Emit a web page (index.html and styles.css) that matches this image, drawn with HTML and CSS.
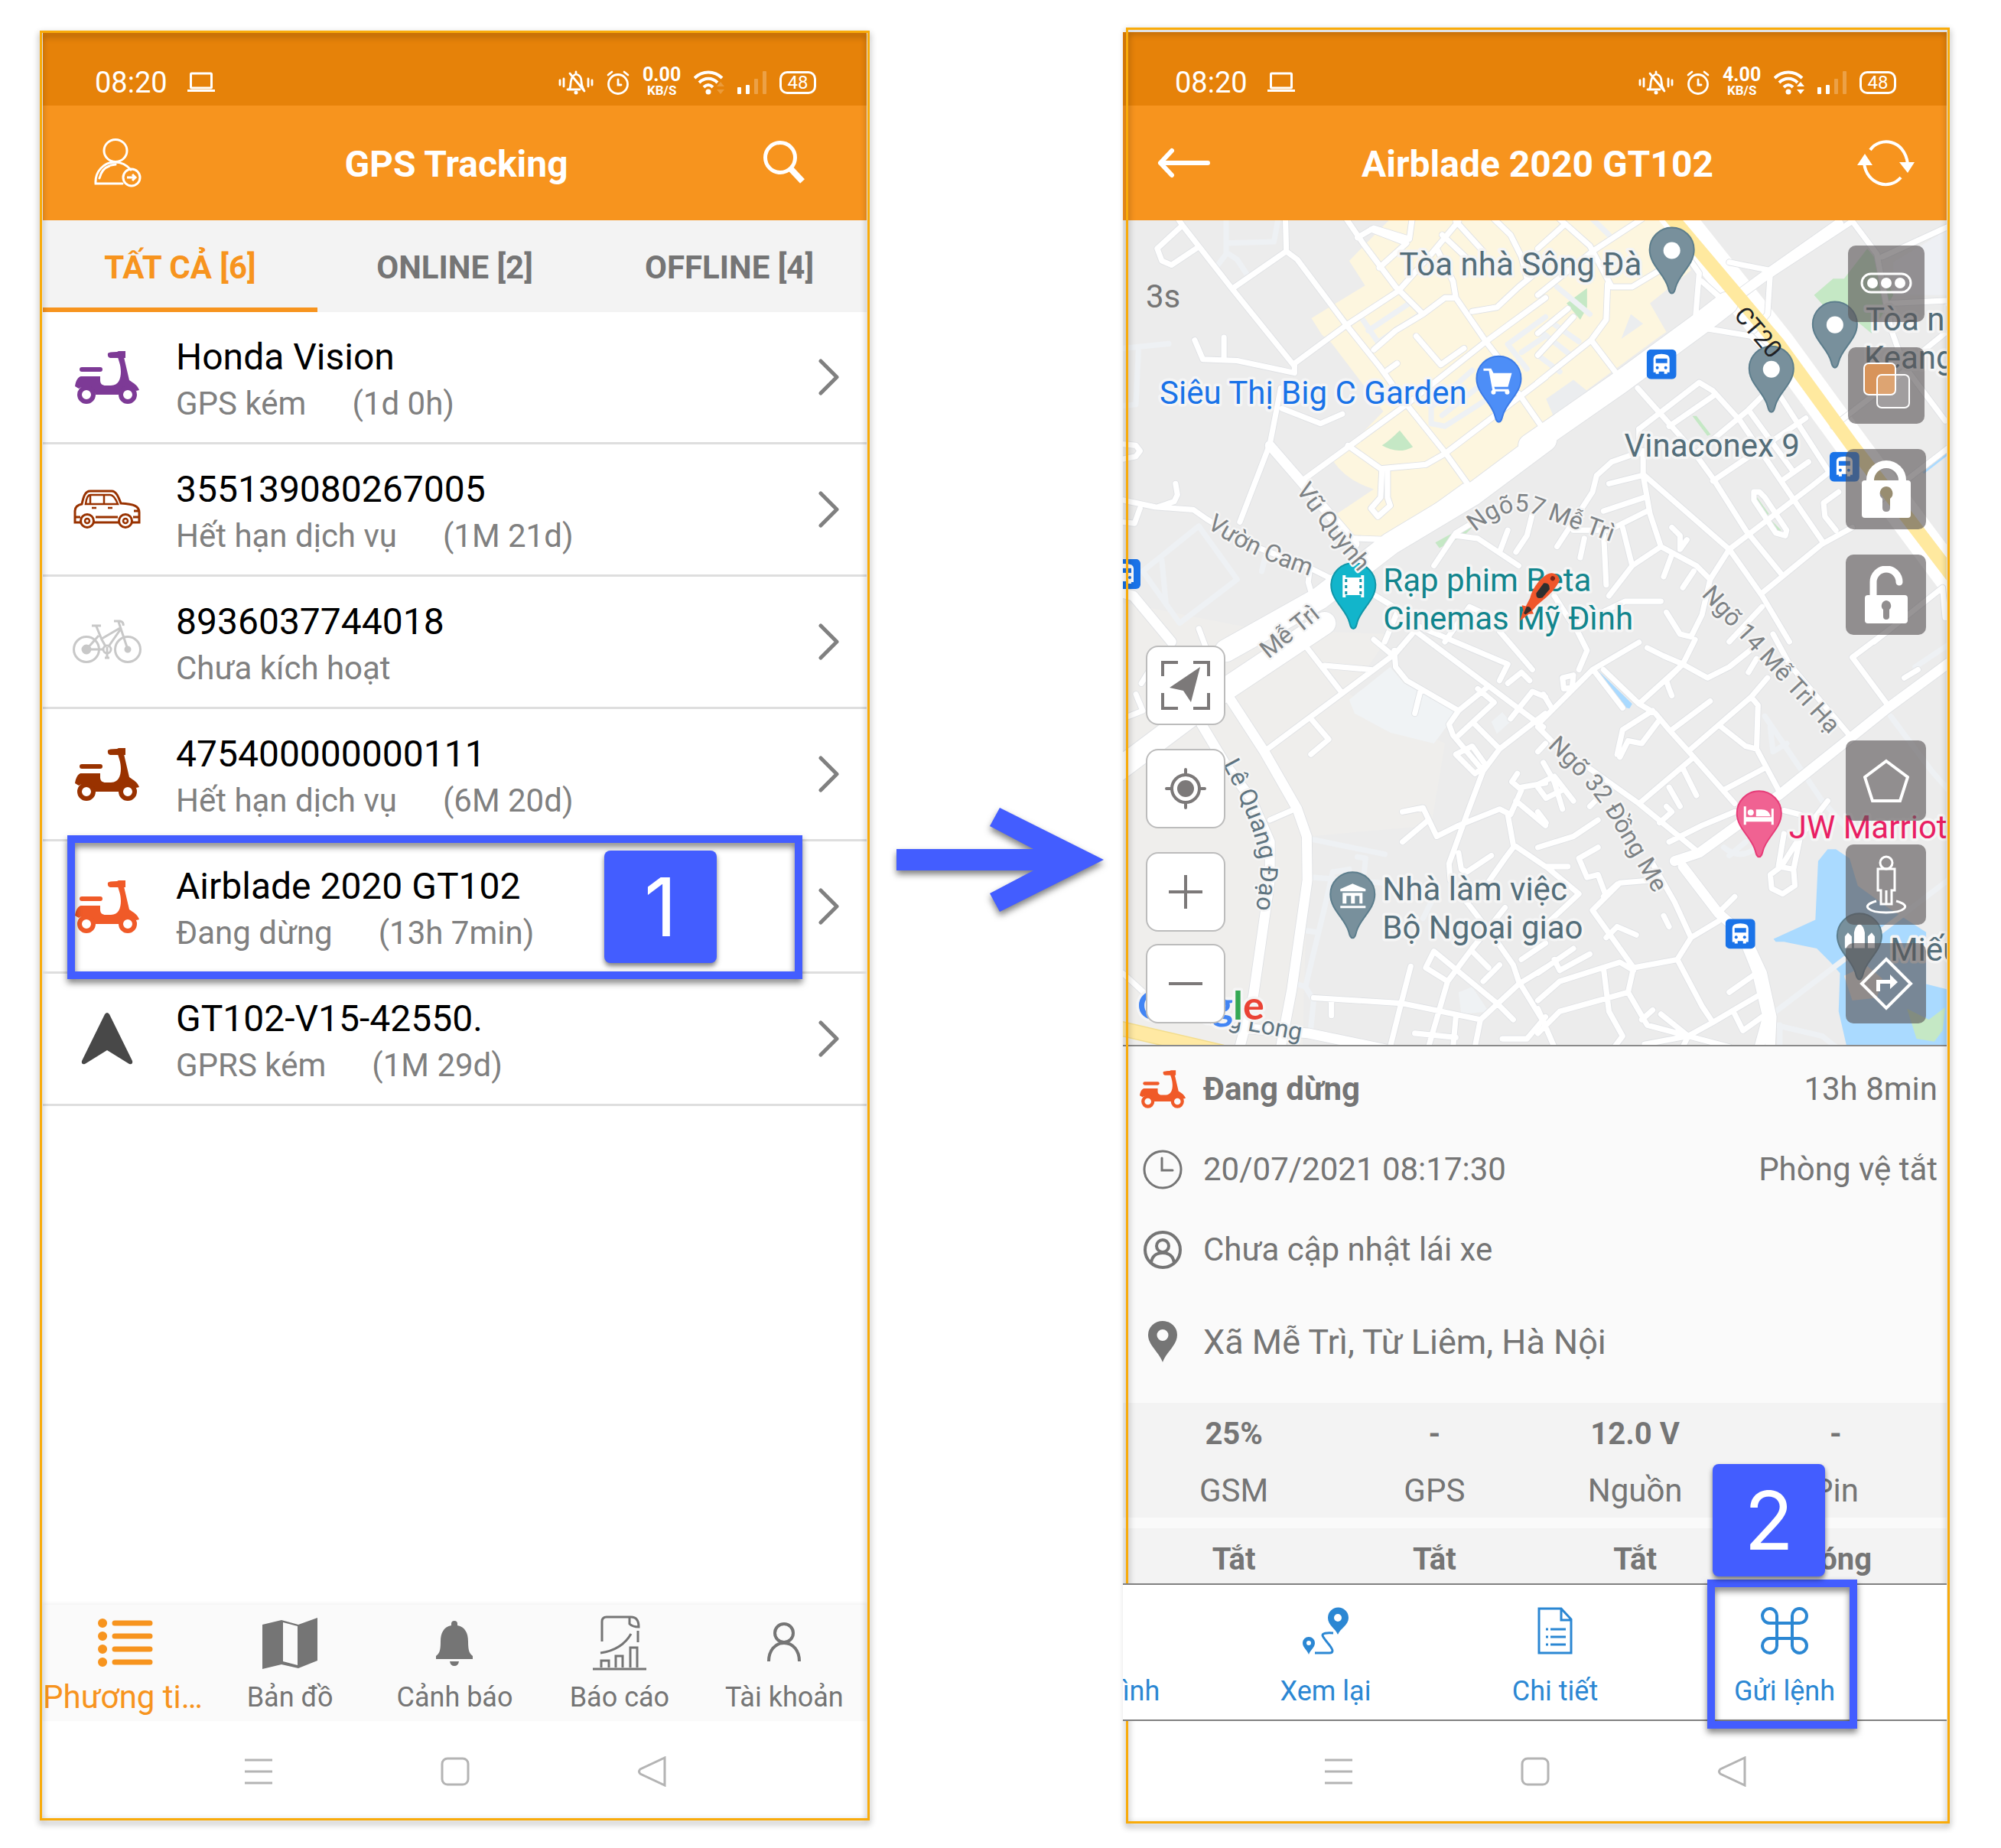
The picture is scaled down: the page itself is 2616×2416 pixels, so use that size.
FILE: index.html
```html
<!DOCTYPE html>
<html lang="vi">
<head>
<meta charset="utf-8">
<meta name="viewport" content="width=device-width, initial-scale=1">
<title>GPS Tracking</title>
<link rel="stylesheet" href="styles.css">
</head>
<body>
<svg class="sprite" aria-hidden="true">
  <symbol id="laptop" viewBox="0 0 36 28">
    <rect x="4.500" y="2" width="27" height="19" rx="1" fill="none" stroke="currentColor" stroke-width="3"/>
    <path d="M0 23H36V26H0Z" fill="currentColor"/>
  </symbol>
  <symbol id="mute" viewBox="0 0 46 32">
    <g fill="none" stroke="currentColor" stroke-width="2.800" stroke-linecap="round">
      <path d="M2 13V19M7 11V21M39 11V21M44 13V19"/>
      <path d="M14 25C17 22 15 17 17 12C18 8 20 6 23 5C28 6 30 10 30 14C30 19 31 22 33 25M12 25H28M15 4L34 27M23 2V4"/>
    </g>
    <circle cx="23" cy="29" r="2.500" fill="currentColor"/>
  </symbol>
  <symbol id="alarm" viewBox="0 0 30 32">
    <g fill="none" stroke="currentColor" stroke-width="2.800" stroke-linecap="round">
      <circle cx="15" cy="18" r="12.500"/>
      <path d="M15 12V19H19M2 6L7 2M28 6L23 2"/>
    </g>
  </symbol>
  <symbol id="wifi" viewBox="0 0 40 32">
    <g fill="none" stroke="currentColor" stroke-width="4">
      <path d="M1 10C11 0 27 0 37 10M7 16C14 9 24 9 31 16M13 22C17 18 21 18 25 22"/>
    </g>
    <circle cx="19" cy="28" r="3.500" fill="currentColor"/>
  </symbol>
  <symbol id="signal" viewBox="0 0 38 32">
    <g fill="currentColor">
      <rect x="0" y="22" width="5" height="9" rx="1"/>
      <rect x="11" y="19" width="5" height="12" rx="1"/>
      <rect x="22" y="11" width="5" height="20" rx="1" opacity=".25"/>
      <rect x="33" y="1" width="5" height="30" rx="1" opacity=".25"/>
    </g>
  </symbol>
  <symbol id="scooter" viewBox="0 0 84 69">
    <g fill="currentColor">
      <path d="M43 3Q44 1 55 1L57 0H66V9H46Q42 8 43 3Z"/>
      <rect x="6" y="21" width="30" height="6" rx="3"/>
      <path d="M0 46C1 38 5 33 8 33H33V38C33 43 36 45 40 45H47C57 45 60 36 60 27C60 18 57 12 56 8H64L71 38C77 42 82 45 84 51L80 52C72 45 62 48 57 57H27C25 48 12 44 5 49Z"/>
    </g>
    <g fill="none" stroke="currentColor" stroke-width="6"><circle cx="15" cy="57" r="9"/><circle cx="69" cy="57" r="9"/></g>
  </symbol>
  <symbol id="chevron" viewBox="0 0 28 48">
    <path d="M3 3L24 24L3 45" fill="none" stroke="currentColor" stroke-width="5" stroke-linecap="round" stroke-linejoin="round"/>
  </symbol>
  <symbol id="pin" viewBox="-32 -32 64 92">
    <path d="M0 57C-3 57-4 53-5 49C-9 32-29 20-29 0A29 29 0 1 1 29 0C29 20 9 32 5 49C4 53 3 57 0 57Z"/>
  </symbol>
  <symbol id="bus" viewBox="0 0 39 39">
    <rect width="39" height="39" rx="6" fill="#1a73e8"/>
    <path d="M9 30V12Q9 6 19.500 6Q30 6 30 12V30H27V32H23V29H16V32H12V30Z" fill="#fff"/>
    <path d="M12 12H27V18H12Z" fill="#1a73e8"/>
    <circle cx="14" cy="24" r="2" fill="#1a73e8"/><circle cx="25" cy="24" r="2" fill="#1a73e8"/>
  </symbol>
</svg>

<main class="guide">
  <section class="phone" aria-label="Danh sách phương tiện">
    <div class="status-bar">
      <span class="time">08:20</span>
      <svg class="laptop"><use href="#laptop"/></svg>
      <div class="status-icons">
        <svg width="46" height="32"><use href="#mute"/></svg>
        <svg width="30" height="32"><use href="#alarm"/></svg>
        <span class="speed"><b>0.00</b><small>KB/S</small></span>
        <svg width="40" height="32" viewBox="0 0 40 32"><use href="#wifi"/><path d="M30 21L35 15L40 21ZM30 25L35 31L40 25Z" fill="currentColor" opacity=".2"/></svg>
        <svg width="38" height="32"><use href="#signal"/></svg>
        <span class="battery">48</span>
      </div>
    </div>
    <header class="app-bar app-bar-list">
      <button class="bar-button" aria-label="Chuyển tài khoản">
        <svg width="62" height="64" viewBox="0 0 62 64" fill="none" stroke="currentColor" stroke-width="3">
          <ellipse cx="28" cy="16" rx="15" ry="14.500"/>
          <path d="M37 59H2C1 44 12 31 27 31C36 31 43 35 48 41M7 52C9 44 14 38 20 36M22 35L28 34" stroke-linecap="round"/>
          <circle cx="49" cy="51" r="11"/>
          <path d="M43 51H54M50 47L54 51L50 55"/>
        </svg>
      </button>
      <h1>GPS Tracking</h1>
      <button class="bar-button" aria-label="Tìm kiếm">
        <svg width="68" height="58" viewBox="0 0 68 58" fill="none" stroke="currentColor">
          <circle cx="22" cy="22" r="19.500" stroke-width="5"/>
          <path d="M36 37L51 53" stroke-width="8"/>
        </svg>
      </button>
    </header>
    <nav class="tabs">
      <a class="tab tab-active" href="#all">TẤT CẢ [6]</a>
      <a class="tab" href="#online">ONLINE [2]</a>
      <a class="tab" href="#offline">OFFLINE [4]</a>
    </nav>
    <ul class="vehicles">
      <li><a class="vehicle" href="#v1">
        <svg class="vehicle-icon purple" width="84" height="69"><use href="#scooter"/></svg>
        <span class="vehicle-text"><span class="name">Honda Vision</span><span class="sub"><span>GPS kém</span><span>(1d 0h)</span></span></span>
        <svg class="chevron"><use href="#chevron"/></svg></a></li>
      <li><a class="vehicle" href="#v2">
        <svg class="vehicle-icon brown" width="88" height="52" viewBox="0 0 88 52" fill="none" stroke="currentColor" stroke-width="3">
          <path d="M10 43H2V28C2 22 6 20 11 19C13 10 15 2 22 2H50C56 2 59 10 62 18C80 19 86 22 86 30V43H77M27 43H59M2 36H9M29 36H58M78 36H86M79 28H86"/>
          <path d="M16 19C17 11 19 7 22 7H48C53 7 56 14 58 19ZM40 7V19M22 7V19M24 24H30M45 24H51" stroke-width="2.500"/>
          <circle cx="18" cy="41" r="8.500"/><circle cx="68" cy="41" r="8.500"/>
          <circle cx="18" cy="41" r="3" stroke-width="2.500"/><circle cx="68" cy="41" r="3" stroke-width="2.500"/>
        </svg>
        <span class="vehicle-text"><span class="name">355139080267005</span><span class="sub"><span>Hết hạn dịch vụ</span><span>(1M 21d)</span></span></span>
        <svg class="chevron"><use href="#chevron"/></svg></a></li>
      <li><a class="vehicle" href="#v3">
        <svg class="vehicle-icon silver" width="90" height="58" viewBox="0 0 90 58" fill="none" stroke="currentColor" stroke-width="3">
          <circle cx="18" cy="39" r="16.500"/><circle cx="72" cy="39" r="16.500"/>
          <circle cx="18" cy="39" r="5" fill="currentColor"/><circle cx="72" cy="39" r="3" fill="currentColor"/>
          <path d="M18 39L34 21M18 39H41M31 9L38 26L43 35M25 8H37M38 25L62 11M47 35L63 12L60 3M54 2H62Q67 3 66 8M63 12L72 39M45 44V50M42 50H48"/>
          <circle cx="45" cy="39" r="5"/><path d="M45 36V43"/>
        </svg>
        <span class="vehicle-text"><span class="name">8936037744018</span><span class="sub"><span>Chưa kích hoạt</span></span></span>
        <svg class="chevron"><use href="#chevron"/></svg></a></li>
      <li><a class="vehicle" href="#v4">
        <svg class="vehicle-icon brown" width="84" height="69"><use href="#scooter"/></svg>
        <span class="vehicle-text"><span class="name">475400000000111</span><span class="sub"><span>Hết hạn dịch vụ</span><span>(6M 20d)</span></span></span>
        <svg class="chevron"><use href="#chevron"/></svg></a></li>
      <li class="step-target"><a class="vehicle" href="#v5">
        <svg class="vehicle-icon orange" width="84" height="69"><use href="#scooter"/></svg>
        <span class="vehicle-text"><span class="name">Airblade 2020 GT102</span><span class="sub"><span>Đang dừng</span><span>(13h 7min)</span></span></span>
        <svg class="chevron"><use href="#chevron"/></svg></a>
        <span class="highlight highlight-row"></span>
        <span class="step step-one">1</span></li>
      <li><a class="vehicle" href="#v6">
        <svg class="vehicle-icon dark" width="68" height="68" viewBox="0 0 68 68"><path d="M31 2Q34 -2 37 2L67 63Q68 68 63 67L34 49L5 67Q0 68 1 63Z" fill="currentColor"/></svg>
        <span class="vehicle-text"><span class="name">GT102-V15-42550.</span><span class="sub"><span>GPRS kém</span><span>(1M 29d)</span></span></span>
        <svg class="chevron"><use href="#chevron"/></svg></a></li>
    </ul>
    <nav class="bottom-nav">
      <a class="nav-item nav-active" href="#vehicles">
        <svg width="72" height="76" viewBox="0 0 72 76" stroke="currentColor" stroke-linecap="round">
          <path d="M22 12H68M22 29H68M22 46H68M22 63H68" stroke-width="7"/>
          <path d="M6 12h.1M6 29h.1M6 46h.1M6 63h.1" stroke-width="12"/>
        </svg><span>Phương tiện</span></a>
      <a class="nav-item" href="#map">
        <svg width="72" height="76" viewBox="0 0 72 76">
          <path d="M0 14L25 8L47 14L72 5V61L47 71L25 66L0 72Z" fill="currentColor"/><path d="M27 11L46 16V67L27 62Z" fill="#fafafa"/>
        </svg><span>Bản đồ</span></a>
      <a class="nav-item" href="#alerts">
        <svg width="48" height="76" viewBox="0 0 48 76" fill="currentColor">
          <path d="M20 13Q20 9 24 9Q28 9 28 13V15C38 17 42 25 42 36C42 49 44 52 48 55V59H0V55C4 52 6 49 6 36C6 25 10 17 20 15ZM18 62H30Q29 68 24 68Q19 68 18 62Z"/>
        </svg><span>Cảnh báo</span></a>
      <a class="nav-item" href="#reports">
        <svg width="70" height="76" viewBox="0 0 70 76" fill="none" stroke="currentColor" stroke-width="3">
          <path d="M12 36V10Q12 4 18 4H50Q60 4 60 17Q52 17 48 13V4M59 22V37M10 51Q38 47 50 26"/>
          <path d="M11 70V61H21V70M30 70V55H39V70M49 70V44H58V70M0 72H70"/>
        </svg><span>Báo cáo</span></a>
      <a class="nav-item" href="#account">
        <svg width="46" height="76" viewBox="0 0 46 76" fill="none" stroke="currentColor" stroke-width="4">
          <circle cx="23" cy="25" r="12"/><path d="M3 62C3 48 11 38 23 38C35 38 43 48 43 62"/>
        </svg><span>Tài khoản</span></a>
    </nav>
    <div class="system-nav">
      <svg width="36" height="40" viewBox="0 0 36 40"><path d="M0 5H36M0 20H36M0 35H36"/></svg>
      <svg width="40" height="40" viewBox="0 0 40 40"><rect x="3" y="3" width="34" height="34" rx="7"/></svg>
      <svg width="40" height="40" viewBox="0 0 40 40"><path d="M37 2V38L5 23Q2 20 5 17Z"/></svg>
    </div>
    <span class="frame frame-list"></span>
  </section>

  <div class="arrow">
    <svg width="272" height="136" viewBox="0 0 272 136"><path d="M0 54H179L122 24L135 0L271 68L135 136L122 112L179 82H0Z" fill="#435dff"/></svg>
  </div>

  <section class="phone" aria-label="Chi tiết phương tiện">
    <div class="status-bar">
      <span class="time">08:20</span>
      <svg class="laptop"><use href="#laptop"/></svg>
      <div class="status-icons">
        <svg width="46" height="32"><use href="#mute"/></svg>
        <svg width="30" height="32"><use href="#alarm"/></svg>
        <span class="speed"><b>4.00</b><small>KB/S</small></span>
        <svg width="40" height="32" viewBox="0 0 40 32"><use href="#wifi"/><path d="M30 21L35 15L40 21ZM30 25L35 31L40 25Z" fill="currentColor"/></svg>
        <svg width="38" height="32"><use href="#signal"/></svg>
        <span class="battery">48</span>
      </div>
    </div>
    <header class="app-bar app-bar-detail">
      <button class="bar-button" aria-label="Quay lại">
        <svg width="70" height="40" viewBox="0 0 70 40" fill="none" stroke="currentColor" stroke-width="6" stroke-linecap="round" stroke-linejoin="round"><path d="M19 4L4 20L19 36M4 20H66"/></svg>
      </button>
      <h1>Airblade 2020 GT102</h1>
      <button class="bar-button" aria-label="Tải lại">
        <svg width="75" height="62" viewBox="0 0 75 62">
          <path d="M17 14C30 -4 62 0 66 32M57 50C43 67 12 60 9 31" fill="none" stroke="currentColor" stroke-width="4"/>
          <path d="M55 30H75L66 44ZM0 34H20L10 19Z" fill="currentColor"/>
        </svg>
      </button>
    </header>

    <div class="map">
      <svg class="map-canvas" viewBox="0 0 1076 1080" preserveAspectRatio="xMidYMid slice" role="img" aria-label="Bản đồ">
        <defs>
          <path id="p-vuon" d="M109 402Q158 438 250 468"/>
          <path id="p-vu" d="M226 354Q258 402 320 476"/>
          <path id="p-57" d="M460 409Q500 374 534 384L650 426"/>
          <path id="p-metri" d="M190 575L270 510"/>
          <path id="p-ct" d="M797 126L860 200"/>
          <path id="p-14" d="M755 491L940 692"/>
          <path id="p-32" d="M554 689Q610 740 632 776L705 900"/>
          <path id="p-le" d="M130 712Q168 780 179 835Q182 862 170 920"/>
          <path id="p-long" d="M66 1042L260 1078"/>
          <g id="roads">
            <g transform="translate(-8 -8) scale(.357143)">
              <path d="M225 22L240 45L420 275L650 560M240 45L148 130L165 175L200 190L290 130M425 275L620 140L617 22M620 140L660 170L840 410L960 560L1060 700L1200 875L1290 1000M650 585V550L840 410L1030 285M650 585L440 540L315 535L285 465M392 535V455M600 640L560 845L450 1130M605 715L745 770L825 735"/>
              <path d="M690 970L1060 700L1350 470L1568 310M845 850L965 935L1130 920L1200 880L1568 600M840 22L900 110L1020 270L1120 370M880 90L940 55L1070 95L1080 22M960 200L1060 110L930 60M1030 285L1150 150L1250 30M1170 130L1230 250L1240 310L1350 470L1450 600M1240 310H1200L1120 370L1020 430L940 500M1190 80L1280 165M1240 30L1340 140M1300 360L1390 345L1470 270L1568 190M1380 22L1440 80L1480 160L1500 240M1095 450L1185 555L1270 495M990 575L1025 550M870 1190L1000 1195L1270 1000"/>
              <path d="M22 1050L140 1075L280 1085L330 1120L480 1210L690 1290L790 1340M150 1075L210 1055L222 1030L215 990M85 1080L65 1135L22 1130M705 1310L700 1350L712 1390M22 845L70 850L85 870L70 890L22 900M970 940L965 1040L930 1080L955 1110L1000 1070L990 1040V940M1160 1290L1240 1170L1290 1140M1240 1180L1320 1190L1470 1290M1430 1160L1400 1240M1520 1100L1500 1180L1460 1240M930 1390L1030 1450L980 1568M1200 1568L1290 1440L1420 1500M1470 660L1560 790M300 1520L330 1600"/>
              <path class="wide" d="M560 850L690 1000L870 1210M22 1390L60 1400L200 1568"/>
              <path class="highway" d="M400 1600L740 1410L1000 1210L1300 1030L1568 830"/>
            </g>
            <g transform="translate(542 -8) scale(.357143)">
              <path d="M0 130L100 40L190 120L270 270H345L470 195M100 40L80 22M0 300L200 140L380 22M255 260L250 390L195 465L290 590M0 620L195 465M0 520L130 380M0 440L110 350M575 400L590 220L520 120M600 250L690 330M700 180L850 210M850 220L840 370L790 430M600 420L780 450L850 520"/>
              <path d="M1150 30L1240 150L1290 420L1340 560L1490 760M1150 30L830 240M1260 160L1500 50M1290 330L1500 320M1340 560L1500 430M1080 780L1340 580M370 790L590 620L640 650L740 760L930 1040L1040 1200M365 640L560 860L640 970L760 1160L890 1320M480 780L640 670M590 870L770 720L830 660M640 980L980 750M700 1230L1000 1000L1150 880M770 720L930 940M880 660L1060 940M890 980L990 910M1100 1020L1045 1060L1050 1110L1090 1160M820 1390L1040 1210L1150 1150M1200 1090L1500 860"/>
              <path d="M385 870V960L410 1100L450 1220L580 1290L630 1340L700 1230L390 960M700 1230L820 1400L920 1568M370 790V880M385 870L270 910L215 960L200 1020L70 1220M260 990L380 960M240 1090L390 1040M130 1160H260L400 1090M310 1150L345 1290L260 1400M240 1160L250 1360M345 1290L450 1220M490 1150L520 1180V1230L545 1195M490 1250L460 1330M570 1310L530 1370M170 1190L155 1260M790 1020V1050L870 1170L905 1180L910 1160L830 1040L810 1020ZM700 1568L820 1440M1230 1568L1480 1370L1490 1480M60 1400L130 1510L320 1420H450M470 1460L520 1540L560 1550L600 1470L630 1340"/>
              <path class="highway" d="M-30 850L300 620L600 400L690 330"/>
              <path class="wide" d="M640 370L830 230L1100 40"/>
            </g>
            <g transform="translate(-8 542) scale(.357143)">
              <path d="M545 425L820 220L1020 70L1080 0M680 30L820 210M760 115L930 130M715 315L775 385L710 440M560 680L640 645M1015 60L1020 120L1060 170L1250 280L1360 190L1560 340M1110 210L1090 290M1080 -20L1360 190M1100 -30L1430 110L1400 170M1250 280L1215 330L1230 370L1340 500L1280 660L1215 840L1220 900L1280 980M1310 330L1400 420L1568 290M1340 500L1400 420M1250 370L1380 250L1320 200M1240 440L1300 410L1350 480L1310 510ZM1045 650L1120 635L1170 740L1250 700L1400 640L1440 660L1480 570L1445 540L1465 510M1140 680L1045 760M1480 560L1568 545M1460 610L1568 700M1430 660L1450 770L1568 850M1250 800L1260 860L1280 870L1370 810M1450 780L1420 820L1350 920"/>
              <path d="M1280 980L1380 1110L1450 1210L1470 1270L1568 1430M1210 1270L1300 1150L1420 1000M1210 1270L1130 1220L1160 1160L1390 1350L1450 1410M1300 1160L1360 1220M1400 1210L1340 1270M1470 1280L1330 1410L1140 1370L1040 1350L720 1330M1210 1270L1140 1510M1075 1215L1040 1350L1000 1510M785 1340V1395M1330 1410L1310 1510M1090 1460L1240 1475M1240 1400L1230 1510M1410 1480H1500L1568 1400M1480 1190L1568 1130M1470 1280L1568 1220M940 20L1000 70M1400 -10L1460 60L1520 130M1430 180L1480 140L1510 170M1440 310L1520 210L1568 230M1540 430L1568 400M70 220L95 280L45 300M90 180L140 100M22 1240L120 1330"/>
              <path class="wide" d="M410 230L540 430L660 640L695 740L697 900L640 1300L600 1510M310 330L400 480L490 600L560 760V900L500 1320L450 1510M440 1440L700 1460L990 1520"/>
              <path class="highway" d="M760 -40L400 200L0 500"/>
            </g>
            <g transform="translate(542 542) scale(.357143)">
              <path d="M0 330L200 130L370 30M0 340L60 400L370 620L590 800M210 140L310 270M240 130L370 255L430 290L480 350L570 450L720 620M375 250L530 110L470 170L480 200L490 225M400 50L460 80L530 110L620 160L700 120L800 40M530 110L575 20M140 -20L180 60L150 130M90 160L130 150L125 195L95 200ZM20 220L50 270M420 280L310 350L290 440M440 320L380 400L330 390L300 450M490 350L630 245M560 420L780 230L840 160M780 230L805 260L800 420L760 410L665 335M800 420L880 570M570 450L370 620M680 570L830 490M530 490L580 590M480 560L520 630M445 690L490 650L470 630M480 760L600 700L720 650M900 645L960 660M770 140L800 90"/>
              <path d="M1060 610L960 740L890 850L850 880L855 930L895 950L940 920L935 860L880 850M960 740L935 860M900 730L880 850M1150 85L1280 260M1150 85L1290 -20M1340 160L1390 130M860 0L920 110L1140 370M0 780L130 740L220 680M0 1090L150 950L30 850L110 850M200 1010L300 910L420 900M200 1010L350 1220L330 1310L400 1430L550 1470L640 1420L810 1320M350 1220L510 1190L560 1110L660 1050M560 1110L500 980L420 840M510 1190L600 1360L640 1420M240 1220L260 1380L310 1470L280 1510M0 1340L80 1270L300 1200L350 1230M330 1310L80 1380L0 1460M0 1370L60 1510M670 1010L720 960M250 1110L290 1070L360 1100M700 1310L800 1240M150 820L180 890L220 880L250 960M150 820L220 780M60 1190L80 1230L190 1170M0 1240L130 1150M380 1410L420 1375M450 1390L550 1470L530 1510M720 1390L750 1450L820 1400M240 960L290 915M480 1070L460 1030"/>
              <path d="M0 550L60 520L130 610M20 470L60 540L90 640M0 560L30 600L90 570M0 650L30 690M190 630L220 600M390 1500L550 1470L700 1510"/>
              <path class="wide" d="M500 830L590 800L880 590L1130 390L1280 270L1510 100M530 850L660 1020L740 1090"/>
              <path class="wide" d="M740 1080L800 1230L840 1400L810 1510M750 1090L820 1240L855 1400L850 1510"/>
            </g>
          </g>
        </defs>

        <rect width="1076" height="1080" fill="#ececec"/>
        <g transform="translate(-8 542) scale(.357143)">
          <path d="M0-120L500-20L1000 0L850 220L1200 400L1150 700L700 740L680 1510H0Z" fill="#efeeec"/>
          <path d="M1000 120L1050 180L1250 280L1160 400L1000 360L870 290L850 240Z" fill="#f0f3f5"/>
          <path d="M1370 320L1410 285L1440 320L1390 365ZM1250 1310L1300 1290L1360 1380L1260 1390Z" fill="#eff2f4"/>
        </g>
        <g transform="translate(-8 -8) scale(.357143)" fill="#fdf6df">
          <path d="M1000 22L850 175L908 265L712 385L750 445L785 475Q850 560 975 725L845 860L790 905Q840 980 940 1010L805 1100L860 1180L1000 1225L1568 830V22Z"/>
          <path d="M1035 795L1083 855Q1030 885 970 850Q1000 830 1035 795ZM1165 1205L1275 1145L1300 1150L1270 1180L1180 1225Z" fill="#c5e8c5"/>
        </g>
        <g transform="translate(542 -8) scale(.357143)">
          <path d="M0 22H480L560 210L410 330L470 435L440 455L0 780Z" fill="#fdf6df"/>
          <path d="M340 370L385 405L305 460ZM30 680L130 610L180 650L60 750Z" fill="#ebedef"/>
          <path d="M1300 180L1500 60V300H1300Z" fill="#eef0f4"/>
          <path d="M1205 130L1245 180L1300 300L1220 440L1160 390L1050 345L1010 300L1080 240H1120ZM180 275V345L155 390L105 330ZM565 742H580L632 810L620 815ZM795 1030L845 1100L835 1110L795 1050ZM850 1120L890 1160L880 1165Z" fill="#c5e8c5"/>
          <path d="M1410 950L1500 880" stroke="#aadaff" stroke-width="8"/>
        </g>
        <g transform="translate(542 542) scale(.357143)">
          <path d="M1060 787H1090L1140 820L1170 920L1280 1000L1420 1090V1280L1500 1300V1510H1130L1100 1380L1105 1240L1070 1200L1020 1150L900 1125H870L862 1115L1015 1045L1025 830ZM220 133L345 255L335 272L318 268Z" fill="#aadaff"/>
          <path d="M1120 1250L1200 1210L1260 1260L1240 1330L1150 1340Z" fill="#ebe4e0"/>
          <path d="M1350 1370L1430 1410L1490 1365L1480 1450L1450 1490L1385 1480Z" fill="#c5e8c5"/>
        </g>
        <g class="lane">
          <path transform="translate(-8 -8) scale(.357143)" d="M400 22V150L370 190M400 110L575 105L590 22M410 150L440 170L480 230M22 495L190 478M80 490L70 700L22 705M300 1145L95 1310L230 1500L440 1340ZM165 1270L180 1430M530 1310L545 1250M920 430L1070 330M960 470L1110 370M900 390L960 480M1500 570L1430 480L1568 380M1150 770L1200 780L1340 690M1150 770V710L1300 575M1190 740L1330 630M1480 510L1568 450"/>
          <path transform="translate(542 -8) scale(.357143)" d="M200 22L260 80M70 270L190 370M50 400L150 470M20 440L120 520M0 520L80 580"/>
          <path transform="translate(-8 542) scale(.357143)" d="M710 750L980 805M880 815L910 820L905 870M720 890L970 910M790 870L760 1000L690 1290L720 1340L710 1440M790 870L850 860M695 1085L730 1090M660 1280L690 1290M1160 960L1120 1040"/>
          <path transform="translate(542 542) scale(.357143)" d="M830 300L1040 610L1140 720M850 340L860 430L910 400M1290 300L1440 500L1510 580M870 1380L1120 1190L1500 900M1380 120L1500 40M870 1430L1040 1470L1090 1510M885 1430V1510M680 780Q740 830 800 780M700 810L760 760"/>
        </g>
        <g transform="translate(542 -8) scale(.357143)"><path d="M490 -10L880 480L1150 850L1560 1400" fill="none" stroke="#fff" stroke-width="120"/></g>
        <use href="#roads" class="road-edge"/>
        <use href="#roads" class="road"/>
        <g fill="none">
          <path d="M710 -10L856 163L953 296L1086 470" stroke="#ffe99f" stroke-width="18"/>
          <path d="M-8 1056L130 1088" stroke="#f3dd8d" stroke-width="20"/>
          <path d="M-8 1056L130 1088" stroke="#ffe9a3" stroke-width="17"/>
        </g>

        <g class="place">
          <text x="361" y="73">Tòa nhà Sông Đà</text>
          <text x="48" y="241" class="shop">Siêu Thị Big C Garden</text>
          <text x="655" y="310">Vinaconex 9</text>
          <text x="970" y="145">Tòa nhà</text>
          <text x="968" y="195">Keangnam</text>
          <text x="340" y="486" class="cinema">Rạp phim Beta</text>
          <text x="340" y="536" class="cinema">Cinemas Mỹ Đình</text>
          <text x="339" y="890">Nhà làm việc</text>
          <text x="339" y="940">Bộ Ngoại giao</text>
          <text x="870" y="809" class="hotel">JW Marriott</text>
          <text x="1002" y="969">Miếu</text>
        </g>

        <g fill="#78909c" stroke="#5c7d8c" stroke-width="2">
          <use href="#pin" x="685" y="8" width="64" height="92"/>
          <use href="#pin" x="815" y="163" width="64" height="92"/>
          <use href="#pin" x="898" y="105" width="64" height="92"/>
          <use href="#pin" x="268" y="850" width="64" height="92"/>
          <use href="#pin" x="930" y="904" width="64" height="92"/>
          <use href="#pin" x="459" y="176" width="64" height="92" fill="#4d8ef7" stroke="#3c7be6"/>
          <use href="#pin" x="269" y="446" width="64" height="92" fill="#12b5cb" stroke="#1196a8"/>
          <use href="#pin" x="799" y="744" width="64" height="92" fill="#f06292" stroke="#e63c78"/>
        </g>
        <g fill="#fff">
          <circle cx="717" cy="41" r="11"/><circle cx="847" cy="196" r="11"/><circle cx="930" cy="138" r="11"/>
          <path d="M471 195H481L484 201H508L503 219H485L486 222H504V225H483L478 198H471Z"/>
          <circle cx="484" cy="226" r="3"/><circle cx="502" cy="226" r="3"/>
          <path d="M287 465H291V468H311V465H315V494H311V491H291V494H287Z"/>
          <path d="M284 875L300 868L317 875V878H284ZM287 880H313V894H309V884H303V894H298V884H292V894H287ZM284 897H317V900H284Z"/>
          <path d="M811 767H814V781H847V770H850V791H847V787H814V791H811ZM827 771H834Q844 771 846 780H827Z"/><circle cx="820" cy="775" r="4"/>
          <path d="M943 952V937L947 932L952 937V952ZM955 952V932Q957 922 962 921Q967 922 969 932V952ZM973 952V937L978 932L982 937V952Z"/>
        </g>
        <g fill="#1196a8"><path d="M290 470h3v4h-3zM290 478h3v4h-3zM290 486h3v4h-3zM309 470h3v4h-3zM309 478h3v4h-3zM309 486h3v4h-3z"/></g>
        <use href="#bus" x="684" y="170" width="39" height="39"/>
        <use href="#bus" x="923" y="304" width="39" height="39"/>
        <use href="#bus" x="-16" y="444" width="39" height="39"/>
        <use href="#bus" x="787" y="914" width="39" height="39"/>

        <g class="street">
          <text><textPath href="#p-vuon">Vườn Cam</textPath></text>
          <text><textPath href="#p-vu">Vũ Quỳnh</textPath></text>
          <text><textPath href="#p-57">Ngõ57 Mễ Trì</textPath></text>
          <text><textPath href="#p-metri">Mễ Trì</textPath></text>
          <text><textPath href="#p-14">Ngõ 14 Mễ Trì Hạ</textPath></text>
          <text><textPath href="#p-32">Ngõ 32 Đồng Me</textPath></text>
          <text class="avenue"><textPath href="#p-le">Lê Quang Đạo</textPath></text>
          <text class="avenue"><textPath href="#p-long">Thăng Long</textPath></text>
          <text class="express"><textPath href="#p-ct">CT20</textPath></text>
        </g>
        <text class="google" x="19" y="1046"><tspan fill="#4285f4">G</tspan><tspan fill="#ea4335">o</tspan><tspan fill="#fbbc05">o</tspan><tspan fill="#4285f4">g</tspan><tspan fill="#34a853">l</tspan><tspan fill="#ea4335">e</tspan></text>
        <g transform="translate(541 494) rotate(36)">
          <path d="M-3-37Q6-42 11-34Q13-22 10-8L6 8L5 18L9 20L4 24L0 38L-5 24L-10 20L-5 18L-7 6Q-12-6-10-22Q-8-34-3-37Z" fill="#f0562b"/>
          <path d="M-4-20Q2-26 7-18L6-4Q0 4-4-4Z" fill="#2f2f2f"/>
          <path d="M-4 18Q0 14 4 18L1 27H-2Z" fill="#3a2d2a"/><circle cx="2" cy="-32" r="3" fill="#7a2418"/>
        </g>
      </svg>

      <span class="refresh-timer">3s</span>

      <div class="map-tools map-tools-left">
        <button class="tool tool-light" aria-label="Theo dõi xe">
          <svg width="64" height="64" viewBox="0 0 64 64"><path d="M2 20V2H22M42 2H62V20M62 42V62H42M22 62H2V42" fill="none" stroke="currentColor" stroke-width="4"/><path d="M51 8L39 54L29 39L11 35Z" fill="currentColor"/></svg>
        </button>
        <button class="tool tool-light" aria-label="Vị trí của tôi">
          <svg width="54" height="54" viewBox="0 0 54 54" fill="none" stroke="currentColor" stroke-width="4"><circle cx="27" cy="27" r="18"/><path d="M27 2V9M27 45V52M2 27H9M45 27H52" stroke-linecap="round"/><circle cx="27" cy="27" r="11" fill="currentColor" stroke="none"/></svg>
        </button>
        <div class="tool-pair">
          <button class="tool tool-light" aria-label="Phóng to"><svg width="44" height="44" viewBox="0 0 44 44" stroke="currentColor" stroke-width="4"><path d="M0 22H44M22 0V44"/></svg></button>
          <button class="tool tool-light" aria-label="Thu nhỏ"><svg width="44" height="44" viewBox="0 0 44 44" stroke="currentColor" stroke-width="4"><path d="M0 22H44"/></svg></button>
        </div>
      </div>

      <div class="map-tools map-tools-top">
        <button class="tool tool-small" aria-label="Thêm"><svg width="68" height="30" viewBox="0 0 68 30"><rect x="2" y="2" width="64" height="24" rx="12" fill="none" stroke="currentColor" stroke-width="3"/><g fill="currentColor"><circle cx="16" cy="14" r="7"/><circle cx="34" cy="14" r="7"/><circle cx="52" cy="14" r="7"/></g></svg></button>
        <button class="tool tool-small" aria-label="Lớp bản đồ"><svg width="62" height="62" viewBox="0 0 62 62" stroke="#fff" stroke-width="2"><rect x="2" y="2" width="41" height="41" rx="6" fill="#d8945a"/><rect x="19" y="17" width="42" height="43" rx="6" fill="#fff" fill-opacity=".15"/></svg></button>
        <button class="tool" aria-label="Khóa"><svg width="64" height="76" viewBox="0 0 64 76"><path d="M11 28V26A21 21 0 0 1 53 26V28" fill="none" stroke="currentColor" stroke-width="10"/><path d="M4 26H60Q64 26 64 30V71Q64 75 60 75H4Q0 75 0 71V30Q0 26 4 26ZM32 34A9 9 0 0 0 27 50V62Q27 67 32 67Q37 67 37 62V50A9 9 0 0 0 32 34Z" fill="currentColor" fill-rule="evenodd"/></svg></button>
        <button class="tool" aria-label="Mở khóa"><svg width="56" height="76" viewBox="0 0 56 76"><path d="M11 40V21A17 17 0 0 1 45 21" fill="none" stroke="currentColor" stroke-width="9" stroke-linecap="round"/><path d="M4 38H52Q56 38 56 42V71Q56 75 52 75H4Q0 75 0 71V42Q0 38 4 38ZM28 45A7 7 0 0 0 24 57V66Q24 70 28 70Q32 70 32 66V57A7 7 0 0 0 28 45Z" fill="currentColor" fill-rule="evenodd"/></svg></button>
      </div>

      <div class="map-tools map-tools-bottom">
        <button class="tool" aria-label="Vùng"><svg width="60" height="58" viewBox="0 0 60 58"><path d="M30 3L58 24L48 55H12L2 24Z" fill="none" stroke="currentColor" stroke-width="4"/></svg></button>
        <div class="tool-pair tool-pair-wide">
          <button class="tool" aria-label="Chế độ đường phố"><svg width="54" height="78" viewBox="0 0 54 78" fill="none" stroke="currentColor" stroke-width="3"><circle cx="27" cy="10" r="8"/><path d="M16 18H38V46H34V64H20V46H16ZM27 46V64M14 60C-8 66 4 75 27 75C50 75 62 66 40 60"/></svg></button>
          <button class="tool" aria-label="Chỉ đường"><svg width="70" height="70" viewBox="0 0 70 70"><path d="M35 3L67 35L35 67L3 35Z" fill="none" stroke="currentColor" stroke-width="4"/><path d="M22 45V30H40V23L50 33L40 42V35H27V45Z" fill="currentColor"/></svg></button>
        </div>
      </div>
    </div>

    <div class="info">
      <div class="info-row">
        <svg class="orange" width="60" height="50"><use href="#scooter"/></svg>
        <strong>Đang dừng</strong><span class="info-end">13h 8min</span>
      </div>
      <div class="info-row">
        <svg width="52" height="52" viewBox="0 0 52 52" fill="none" stroke="currentColor" stroke-width="3"><circle cx="26" cy="26" r="24"/><path d="M25 11V27H39" stroke-linecap="round"/></svg>
        <span>20/07/2021 08:17:30</span><span class="info-end">Phòng vệ tắt</span>
      </div>
      <div class="info-row">
        <svg width="52" height="52" viewBox="0 0 52 52" fill="none" stroke="currentColor" stroke-width="4"><circle cx="26" cy="26" r="23"/><circle cx="26" cy="21" r="8"/><path d="M11 43C12 34 18 30 26 30C34 30 40 34 41 43"/></svg>
        <span>Chưa cập nhật lái xe</span>
      </div>
      <div class="info-row info-address">
        <svg width="38" height="54" viewBox="0 0 38 54"><path d="M19 54C14 40 0 32 0 18A19 18 0 0 1 38 18C38 32 24 40 19 54ZM19 11A7 7 0 1 0 19 26A7 7 0 1 0 19 11Z" fill="currentColor"/></svg>
        <span>Xã Mễ Trì, Từ Liêm, Hà Nội</span>
      </div>
    </div>

    <dl class="stats">
      <div><dd>25%</dd><dt>GSM</dt></div>
      <div><dd>-</dd><dt>GPS</dt></div>
      <div><dd>12.0 V</dd><dt>Nguồn</dt></div>
      <div><dd>-</dd><dt>Pin</dt></div>
    </dl>
    <dl class="stats stats-cut">
      <div><dd>Tắt</dd></div>
      <div><dd>Tắt</dd></div>
      <div><dd>Tắt</dd></div>
      <div><dd>Đóng</dd></div>
    </dl>

    <div class="actions-area step-target">
      <nav class="actions">
        <a class="action" href="#trip"><svg width="62" height="62"></svg><span>Hành trình</span></a>
        <a class="action" href="#replay">
          <svg width="62" height="62" viewBox="0 0 62 62"><path d="M47 36C44 28 34 24 34 14A13 13 0 0 1 61 14C61 24 50 28 47 36ZM47 9A5 5 0 1 0 47 19A5 5 0 1 0 47 9ZM9 62C7 56 1 53 1 47A8 8 0 0 1 17 47C17 53 11 56 9 62ZM9 44A3 3 0 1 0 9 50A3 3 0 1 0 9 44Z" fill="currentColor"/><path d="M41 34Q27 33 27 37C28 42 40 52 40 57Q40 60 36 60H17" fill="none" stroke="currentColor" stroke-width="3"/></svg>
          <span>Xem lại</span></a>
        <a class="action" href="#detail">
          <svg width="46" height="62" viewBox="0 0 46 62" fill="none" stroke="currentColor" stroke-width="3"><path d="M2 2H31L44 16V60H2ZM31 2V17H44"/><path d="M17 29H37M17 39H37M17 49H37M11 29H14M11 39H14M11 49H14"/></svg>
          <span>Chi tiết</span></a>
        <a class="action" href="#command">
          <svg width="62" height="62" viewBox="0 0 62 62" fill="none" stroke="currentColor" stroke-width="4"><path d="M21 21V12A9.500 9.500 0 1 0 11 21H50A9.500 9.500 0 1 0 41 12V50A9.500 9.500 0 1 0 50 41H11A9.500 9.500 0 1 0 21 50Z"/></svg>
          <span>Gửi lệnh</span></a>
      </nav>
      <span class="highlight highlight-action"></span>
      <span class="step step-two">2</span>
    </div>

    <div class="system-nav">
      <svg width="36" height="40" viewBox="0 0 36 40"><path d="M0 5H36M0 20H36M0 35H36"/></svg>
      <svg width="40" height="40" viewBox="0 0 40 40"><rect x="3" y="3" width="34" height="34" rx="7"/></svg>
      <svg width="40" height="40" viewBox="0 0 40 40"><path d="M37 2V38L5 23Q2 20 5 17Z"/></svg>
    </div>
    <span class="frame frame-detail"></span>
  </section>
</main>
</body>
</html>
```
FILE: styles.css
```css
* { box-sizing: border-box; }

body {
  margin: 0;
  background: #fff;
  color: #757575;
  font-family: Roboto, "Noto Sans", sans-serif;
  font-size: 42px;
}

a { color: inherit; text-decoration: none; }
ul, dl, dd { margin: 0; padding: 0; list-style: none; }
button { border: 0; padding: 0; background: none; color: inherit; font: inherit; display: grid; place-items: center; }
svg { display: block; flex: none; }
.sprite { position: absolute; width: 0; height: 0; }

.guide {
  display: grid;
  grid-template-columns: minmax(0, 1fr) 335px minmax(0, 1fr);
  min-height: 100vh;
  padding: 42px 71px 34px 56px;
}

.phone {
  position: relative;
  display: flex;
  flex-direction: column;
  min-width: 0;
}

.frame {
  position: absolute;
  border: 3px solid #f9ab0a;
  filter: drop-shadow(0 4px 4px rgba(0, 0, 0, .45));
  pointer-events: none;
}
.frame-list { inset: -2px -4px 2px; }
.frame-detail { inset: -6px -4px -2px 4px; }

.arrow {
  display: flex;
  align-items: center;
  justify-content: center;
  padding: 0 0 176px 14px;
}
.arrow svg { filter: drop-shadow(0 5px 4px rgba(0, 0, 0, .5)); overflow: visible; }

/* Status bar */
.status-bar {
  display: flex;
  align-items: center;
  height: 96px;
  padding: 36px 66px 0 68px;
  background: #e68209;
  color: #fff;
}
.time { font-size: 38px; }
.laptop { width: 36px; height: 28px; margin-left: 26px; }
.status-icons { display: flex; align-items: center; gap: 17px; margin-left: auto; }
.speed { display: grid; justify-items: center; width: 50px; line-height: 20px; }
.speed b { font-size: 25px; font-weight: 700; }
.speed small { font-size: 17px; font-weight: 700; }
.battery {
  width: 48px;
  height: 30px;
  border: 3px solid #fff;
  border-radius: 10px;
  font-size: 24px;
  line-height: 24px;
  text-align: center;
}

/* App bar */
.app-bar {
  display: grid;
  grid-template-columns: 1fr auto 1fr;
  align-items: center;
  height: 150px;
  background: #f7941e;
  color: #fff;
}
.app-bar-list { padding: 0 67px; }
.app-bar-detail { padding: 0 42px 0 45px; }
.app-bar h1 { margin: 0; font-size: 48px; line-height: 56px; font-weight: 700; padding: 4px 0 0 4px; }
.bar-button { justify-self: start; }
.bar-button:last-child { justify-self: end; }

/* Tabs */
.tabs { display: grid; grid-template-columns: repeat(3, 1fr); height: 120px; background: #f3f3f3; }
.tab {
  display: grid;
  place-items: center;
  border-bottom: 6px solid transparent;
  padding-top: 8px;
  font-weight: 700;
}
.tab-active { color: #f7941e; border-color: #f7941e; }

/* Vehicle list */
.vehicles { flex: 1 0 auto; }
.vehicles li { position: relative; border-bottom: 3px solid #dedede; }
.vehicle {
  display: grid;
  grid-template-columns: 90px 1fr 28px;
  column-gap: 45px;
  align-items: center;
  height: 170px;
  padding: 0 35px 0 39px;
}
.vehicle-icon { justify-self: center; }
.vehicle-text { display: grid; gap: 8px; padding-top: 6px; }
.name { color: #000; font-size: 48px; line-height: 56px; }
.sub { display: flex; gap: 60px; line-height: 50px; color: #808080; }
.chevron { width: 28px; height: 48px; color: #808080; }

.purple { color: #7d3a96; }
.brown { color: #993200; }
.silver { color: #c8c8c8; }
.orange { color: #f05a28; }
.dark { color: #484848; }

/* Bottom navigation */
.bottom-nav {
  display: grid;
  grid-template-columns: repeat(5, 1fr);
  height: 152px;
  background: #fafafa;
  box-shadow: 0 -2px 4px rgba(0, 0, 0, .05);
}
.nav-item {
  display: flex;
  flex-direction: column;
  align-items: center;
  gap: 8px;
  min-width: 0;
  padding-top: 12px;
  font-size: 36px;
}
.nav-item span { max-width: 100%; overflow: hidden; text-overflow: ellipsis; white-space: nowrap; line-height: 50px; }
.nav-active { color: #f7941e; font-size: 42px; }

.system-nav {
  display: grid;
  grid-template-columns: repeat(3, 36px);
  justify-content: center;
  align-items: center;
  gap: 221px;
  height: 132px;
  background: #fff;
}
.system-nav svg { fill: none; stroke: #b4b4b4; stroke-width: 3; justify-self: center; }

/* Step markers */
.highlight {
  position: absolute;
  border: 10px solid #435dff;
  filter: drop-shadow(0 5px 4px rgba(0, 0, 0, .5));
  pointer-events: none;
}
.highlight-row { inset: -8px 84px -10px 32px; }
.highlight-action { top: -7px; bottom: -12px; right: 117px; width: 196px; }
.step-target { position: relative; z-index: 1; }
.step {
  position: absolute;
  width: 147px;
  height: 147px;
  border-radius: 8px;
  background: #435dff;
  box-shadow: 0 4px 6px rgba(0, 0, 0, .5);
  color: #fff;
  font-family: Inter, "Liberation Sans", sans-serif;
  font-size: 106px;
  line-height: 147px;
  text-align: center;
}
.step-one { top: 12px; right: 196px; }
.step-two { top: -158px; right: 159px; }

/* Map */
.map { position: relative; flex: 1 0 1080px; overflow: hidden; border-bottom: 2px solid #8a8a8a; }
.map-canvas { position: absolute; inset: 0; width: 100%; height: 100%; }
.road, .road-edge, .lane { fill: none; stroke-linecap: round; stroke-linejoin: round; }
.road { stroke: #fff; stroke-width: 20px; --edge: 0px; }
.road-edge { stroke: #dfe1e4; stroke-width: 25px; --edge: 5px; }
.lane path { stroke: #eef1f4; stroke-width: 20px; }
.wide { stroke-width: calc(36px + var(--edge)); }
.highway { stroke-width: calc(82px + var(--edge)); }
.place text, .street text, .google { paint-order: stroke; stroke: #f5f5f5; stroke-width: 7px; stroke-linejoin: round; }
.place { font-size: 42px; fill: #546e7a; }
.place .shop { fill: #1a73e8; }
.place .cinema { fill: #12858d; }
.place .hotel { fill: #e91e63; }
.street { font-size: 32px; fill: #7d8285; }
.street text { stroke-width: 5px; }
.street .avenue { fill: #5f7480; }
.street .express { fill: #202124; stroke: none; }
.google { font-family: Lato, sans-serif; font-size: 52px; font-weight: 700; }
.refresh-timer { position: absolute; left: 30px; top: 77px; font-size: 42px; line-height: 46px; }

.map-tools { position: absolute; display: flex; flex-direction: column; align-items: center; gap: 31px; }
.map-tools-left { left: 30px; bottom: 28px; }
.map-tools-top { right: 27px; top: 33px; gap: 33px; }
.map-tools-bottom { right: 27px; bottom: 28px; }
.tool-pair { display: grid; gap: 16px; }
.tool-pair-wide { gap: 24px; }
.tool { width: 105px; height: 105px; border-radius: 10px; background: rgba(88, 84, 85, .62); color: #fff; }
.tool-small { width: 100px; height: 100px; }
.tool-light { width: 104px; height: 104px; border: 2px solid #bcbcbc; border-radius: 16px; background: #fff; color: #7c7979; }

/* Vehicle details */
.info { padding: 3px 12px 12px 20px; background: #fafafa; }
.info-row {
  display: grid;
  grid-template-columns: 64px 1fr auto;
  align-items: center;
  column-gap: 21px;
  height: 105px;
}
.info-row svg { justify-self: center; }
.info-row strong { font-weight: 700; }
.info-address { height: 136px; font-size: 45px; }

.stats {
  display: grid;
  grid-template-columns: repeat(4, 1fr);
  height: 150px;
  padding: 4px 14px 0;
  background: #f3f3f3;
  line-height: 74px;
  text-align: center;
}
.stats dd { font-size: 40px; font-weight: 700; }
.stats-cut { height: 86px; border-top: 14px solid #fafafa; overflow: hidden; }

.actions-area { height: 180px; background: #fff; border: solid #808080; border-width: 2px 0; }
.actions { display: flex; justify-content: flex-end; height: 176px; padding-right: 62px; overflow: hidden; color: #2b87d3; }
.action {
  flex: none;
  display: flex;
  flex-direction: column;
  align-items: center;
  gap: 26px;
  width: 300px;
  padding-top: 29px;
  font-size: 36px;
  line-height: 44px;
}
```
